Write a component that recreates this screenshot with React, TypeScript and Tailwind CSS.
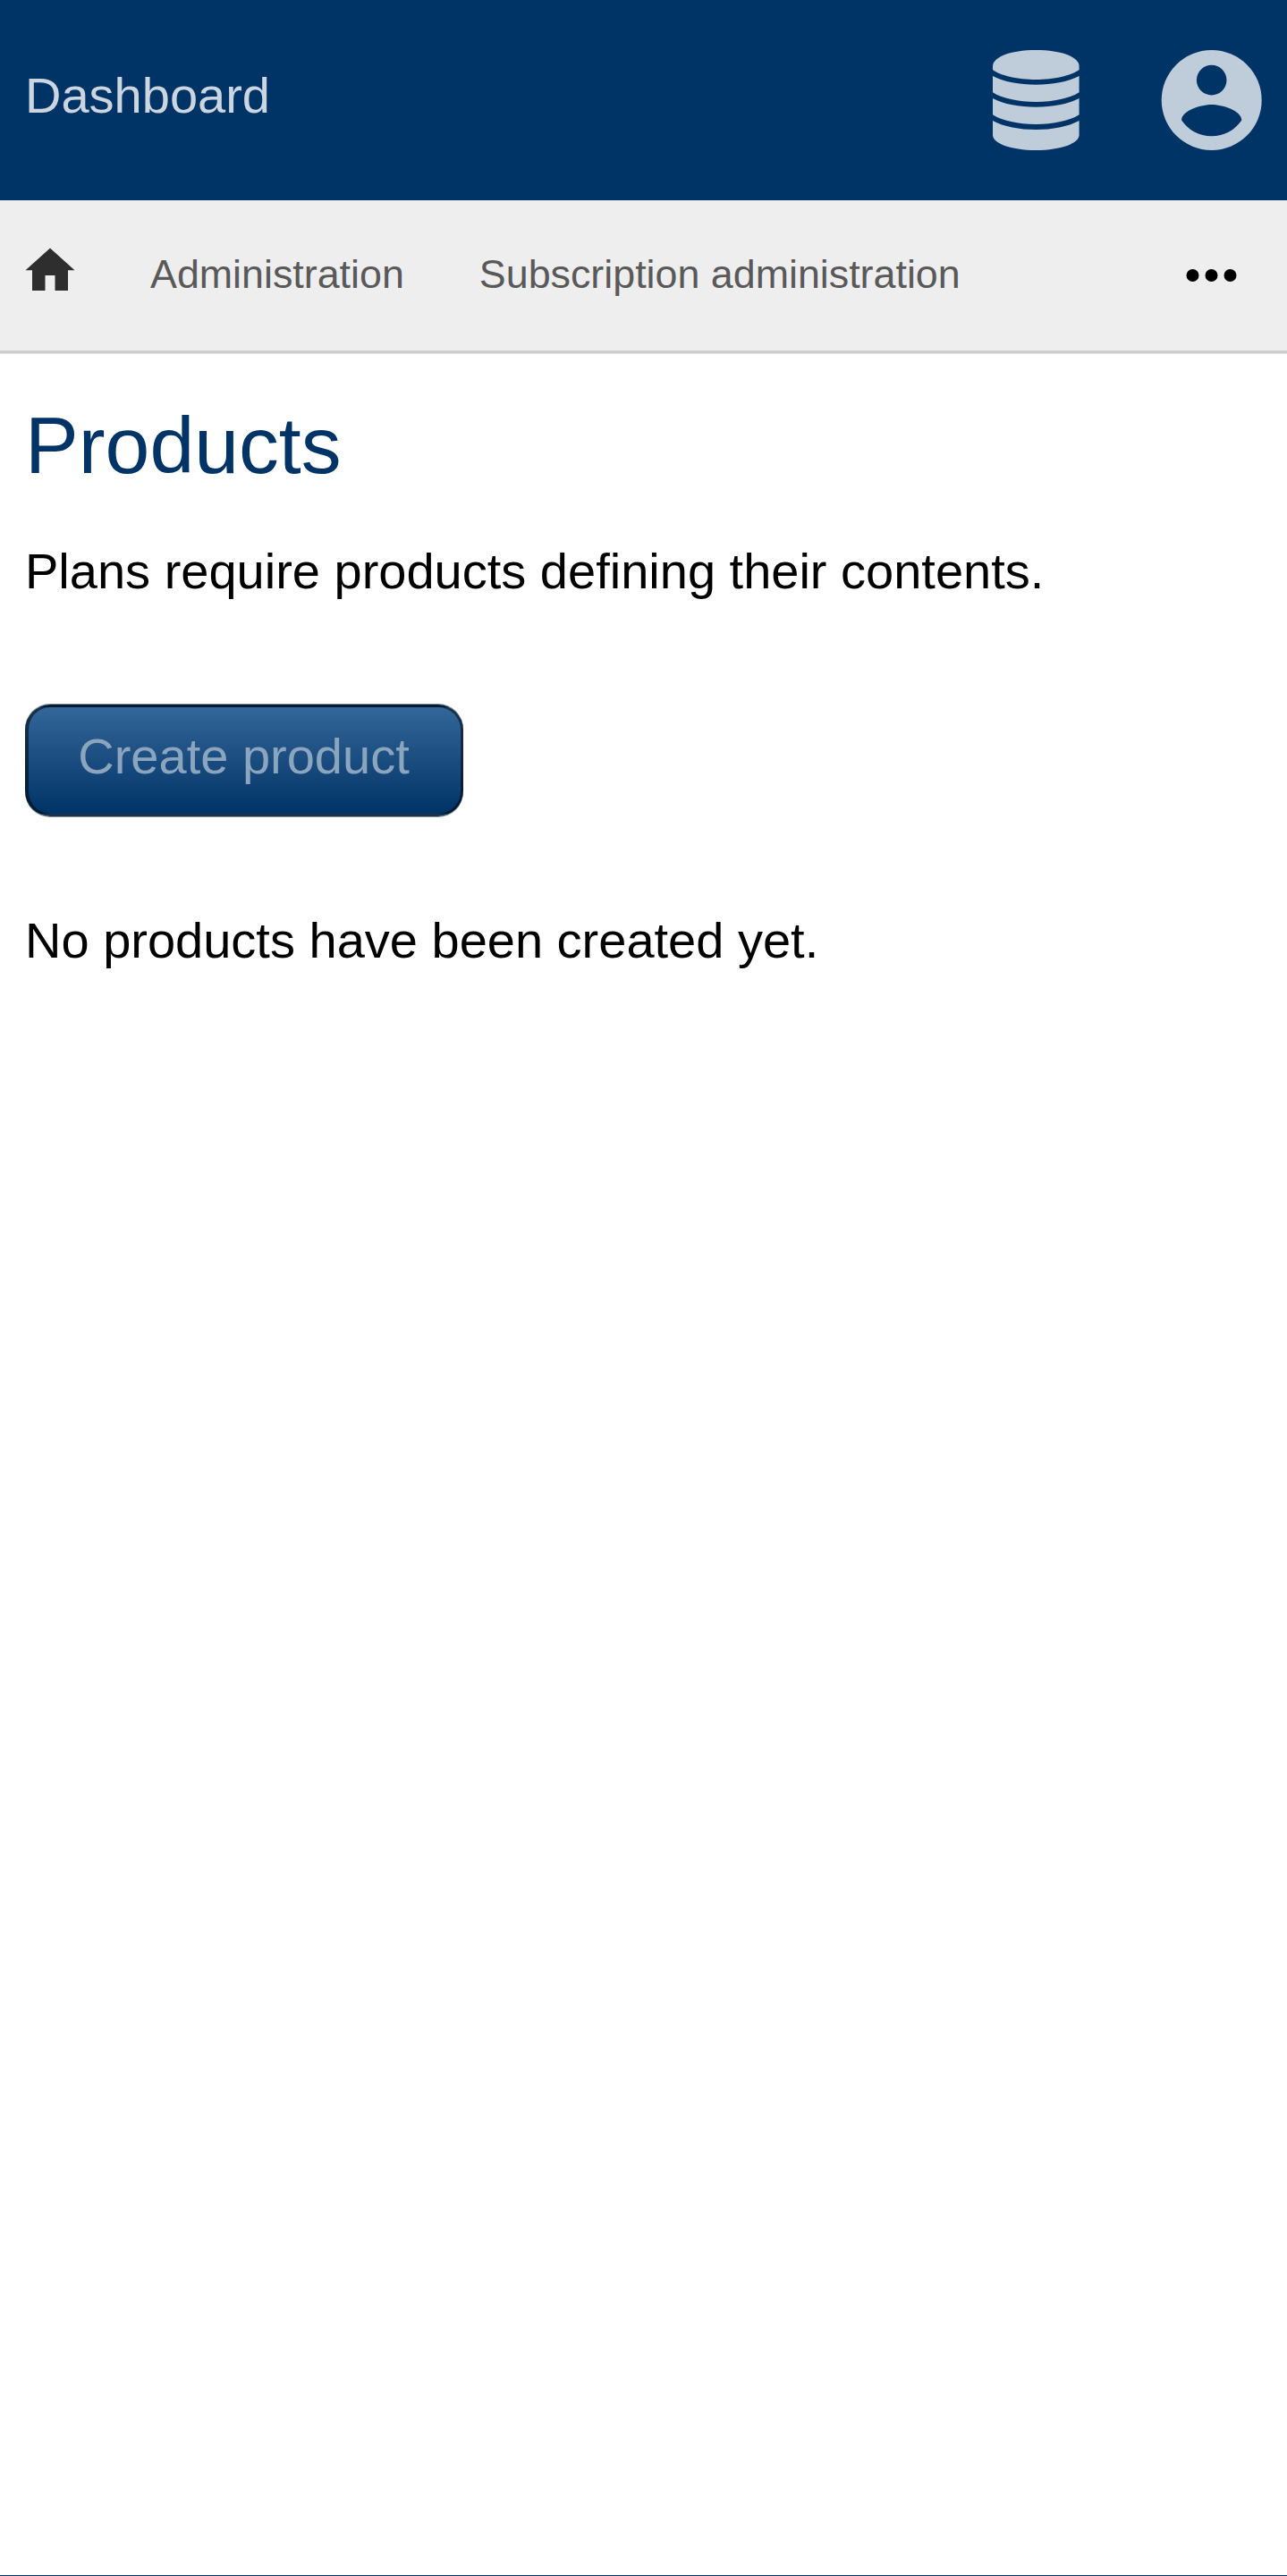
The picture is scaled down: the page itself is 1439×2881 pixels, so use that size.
export default function App() {
  return (
    <div className="flex h-[2881px] w-[1439px] flex-col overflow-hidden bg-white font-['Liberation_Sans',Arial,sans-serif] text-[56px] leading-[63px] text-black">
      <header className="flex h-[224px] shrink-0 items-start justify-between bg-[#003366] px-[28px]">
        <a className="mt-[75px] text-[#ccd6e0]">Dashboard</a>
        <div className="mt-[56px] flex gap-[84px] text-[#bfccd9]">
          <svg className="h-[112px] w-[112px]" viewBox="0 0 112 112" fill="currentColor">
            <path d="M8 18C8 8 27 0 56.3 0S104.6 8 104.6 18V22C96 28.5 76 33 56.3 33S16 28.5 8 22Z" />
            <path d="M8 29C20 35.5 38 38.7 56.3 38.7S92 35.5 104.6 29V47.3C94 54 76 58 56.3 58S18 54 8 47.3Z" />
            <path d="M8 54C20 60.5 38 63.7 56.3 63.7S92 60.5 104.6 54V72.3C94 79 76 83 56.3 83S18 79 8 72.3Z" />
            <path d="M8 79C20 85.7 38 89 56.3 89S92 85.7 104.6 79V95C104.6 104 85 112 56.3 112S8 104 8 95Z" />
          </svg>
          <svg className="h-[112px] w-[113px]" viewBox="-0.7 0 113 112" fill="currentColor">
            <path fillRule="evenodd" d="M56 0a56 56 0 1 0 0 112a56 56 0 1 0 0-112ZM56 16.8a16.8 16.8 0 1 1 0 33.6a16.8 16.8 0 1 1 0-33.6ZM56 96.3C42 96.3 29.7 89.2 22.4 78.4C22.6 67.2 44.8 61 56 61S89.4 67.2 89.6 78.4C82.3 89.2 70 96.3 56 96.3Z" />
          </svg>
        </div>
      </header>

      <nav className="flex h-[168px] shrink-0 items-start bg-[#eeeeee] pl-[28px] pr-[56px] text-[44.8px] leading-[51px] text-[#595959]">
        <svg className="mt-[53px] h-[49px] w-[56px]" viewBox="0 0 56 49" fill="#2e2e2e">
          <path d="M28 0.5L55.5 25.2H48V48H33.5V31H22.5V48H8V25.2H0.5Z" />
        </svg>
        <a className="ml-[84px] mt-[57px] whitespace-nowrap">Administration</a>
        <a className="ml-[84px] mt-[57px] whitespace-nowrap">Subscription administration</a>
        <svg className="ml-auto mt-[77px] h-[14px] w-[57px]" viewBox="0 0 57 14" fill="#000000">
          <circle cx="7.5" cy="7" r="7" />
          <circle cx="28.5" cy="7" r="7" />
          <circle cx="49.5" cy="7" r="7" />
        </svg>
      </nav>
      <div className="h-[4px] shrink-0 border-b border-[#e5e5e5] bg-[#cccccc]" />

      <main className="flex flex-1 flex-col items-start px-[28px]">
        <h1 className="mt-[52px] text-[89.6px] leading-[100px] text-[#003366]">Products</h1>
        <p className="mt-[59px] whitespace-nowrap">Plans require products defining their contents.</p>
        <button className="mt-[118px] flex h-[125px] w-[490px] items-start justify-center rounded-[28px] border-y-[3px] border-l-[4px] border-r-[3px] border-black/50 bg-linear-to-b from-[#336699] to-[#003366] pr-[2px] pt-[23px] text-[#8ca5be] shadow-[0_1px_0_0_rgba(0,26,51,0.5),0_-1px_0_0_rgba(0,26,51,0.5)]">
          Create product
        </button>
        <p className="mt-[107px] whitespace-nowrap">No products have been created yet.</p>
      </main>
      <footer className="h-px shrink-0 bg-[#003366]" />
    </div>
  );
}
